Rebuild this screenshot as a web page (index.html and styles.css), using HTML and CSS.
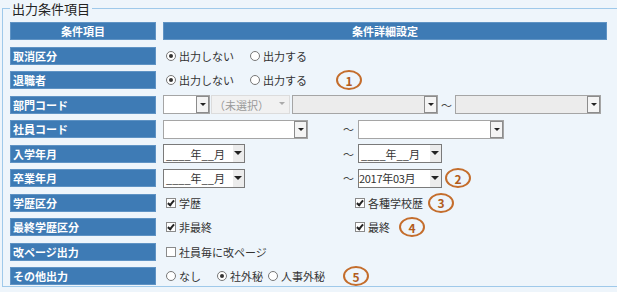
FILE: index.html
```html
<!DOCTYPE html>
<html lang="ja">

<head>
  <meta charset="UTF-8" />
  <title>出力条件項目</title>
  <link rel="stylesheet" href="styles.css">
</head>

<body>
  <fieldset class="conditions">
    <legend>出力条件項目</legend>
    <section class="grid">
      <div class="head">条件項目</div>
      <div class="head">条件詳細設定</div>

      <div class="label">取消区分</div>
      <div class="value opts">
        <span class="opt"><i class="radio on"></i>出力しない</span>
        <span class="opt"><i class="radio"></i>出力する</span>
      </div>

      <div class="label">退職者</div>
      <div class="value opts">
        <span class="opt"><i class="radio on"></i>出力しない</span>
        <span class="opt"><i class="radio"></i>出力する</span>
        <span class="mark">1</span>
      </div>

      <div class="label">部門コード</div>
      <div class="value dept">
        <div class="combo small"><span></span><b class="btn"></b></div>
        <div class="combo off"><span>（未選択）</span><b class="tri"></b></div>
        <div class="combo grey mid"><span></span><b class="btn"></b></div>
        <span class="tilde">～</span>
        <div class="combo grey mid"><span></span><b class="btn"></b></div>
      </div>

      <div class="label">社員コード</div>
      <div class="value pair">
        <div class="combo code"><span></span><b class="btn"></b></div>
        <span class="tilde">～</span>
        <div class="combo code"><span></span><b class="btn"></b></div>
      </div>

      <div class="label">入学年月</div>
      <div class="value pair">
        <div class="combo date"><span>____年__月</span><b class="drop"></b></div>
        <span class="tilde">～</span>
        <div class="combo date"><span>____年__月</span><b class="drop"></b></div>
      </div>

      <div class="label">卒業年月</div>
      <div class="value pair">
        <div class="combo date"><span>____年__月</span><b class="drop"></b></div>
        <span class="tilde">～</span>
        <div class="combo date"><span class="filled">2017年03月</span><b class="drop"></b></div>
        <span class="mark near">2</span>
      </div>

      <div class="label">学歴区分</div>
      <div class="value pair">
        <span class="opt"><i class="check on"></i>学歴</span>
        <span class="opt"><i class="check on"></i>各種学校歴</span>
        <span class="mark">3</span>
      </div>

      <div class="label">最終学歴区分</div>
      <div class="value pair">
        <span class="opt"><i class="check on"></i>非最終</span>
        <span class="opt"><i class="check on"></i>最終</span>
        <span class="mark far">4</span>
      </div>

      <div class="label">改ページ出力</div>
      <div class="value">
        <span class="opt"><i class="check"></i>社員毎に改ページ</span>
      </div>

      <div class="label">その他出力</div>
      <div class="value opts short">
        <span class="opt"><i class="radio"></i>なし</span>
        <span class="opt"><i class="radio on"></i>社外秘</span>
        <span class="opt"><i class="radio"></i>人事外秘</span>
        <span class="mark farther">5</span>
      </div>
    </section>
  </fieldset>
</body>

</html>
```

FILE: styles.css
```css
body {
  margin: 0;
  padding: 0 0 0 2px;
  background-color: #eef5fb;
  font-family: "Noto Sans CJK JP", "Liberation Sans", sans-serif;
  font-size: 11px;
  color: #333;
}

.conditions {
  margin: 0;
  padding: 5px 0 1px 7px;
  width: 615px;
  box-sizing: border-box;
  border: 1px solid #9fc9ea;
  border-right: none;
}

.conditions legend {
  padding: 0 2px;
  margin-left: 0;
  font-size: 13px;
  line-height: 17px;
  color: #222;
}

.grid {
  display: grid;
  grid-template-columns: 146px 444px;
  grid-auto-rows: 18px;
  column-gap: 7px;
  row-gap: 6.5px;
}

.head,
.label {
  background-color: #3e7bb5;
  border: 1px solid #5f93c4;
  color: #fff;
  font-weight: bold;
  line-height: 16px;
}

.head {
  text-align: center;
}

.label {
  padding-left: 2px;
}

.value {
  display: flex;
  align-items: center;
  white-space: nowrap;
}

.opt {
  display: inline-flex;
  align-items: center;
  flex-shrink: 0;
}

.opts .opt {
  min-width: 84px;
}

.opts.short .opt {
  min-width: 51px;
}

.pair .opt:first-child {
  width: 189px;
}

.radio,
.check {
  display: inline-block;
  box-sizing: border-box;
  width: 10px;
  height: 10px;
  margin: 0 3px 0 3px;
  border: 1px solid #777;
  background-color: #fff;
  position: relative;
}

.radio {
  border-radius: 50%;
}

.radio.on::after {
  content: "";
  position: absolute;
  left: 2px;
  top: 2px;
  width: 4px;
  height: 4px;
  border-radius: 50%;
  background-color: #333;
}

.check {
  border-color: #8a8a8a;
}

.check.on::after {
  content: "";
  position: absolute;
  left: 2px;
  top: 0px;
  width: 2px;
  height: 5px;
  border: solid #222;
  border-width: 0 2px 2px 0;
  transform: rotate(40deg);
}

.tilde {
  width: 15px;
  flex-shrink: 0;
  color: #444;
}

.combo {
  display: flex;
  align-items: center;
  flex-shrink: 0;
  box-sizing: border-box;
  height: 19px;
  border: 1px solid #a5a5a5;
  background-color: #fff;
}

.combo span {
  flex: 1;
  padding-left: 2px;
  overflow: hidden;
}

.combo .btn {
  box-sizing: border-box;
  width: 13px;
  height: 17px;
  border: 1px solid #8c8c8c;
  background-color: #f4f4f4;
  position: relative;
}

.combo .btn::after,
.combo .tri::after,
.combo .drop::after {
  content: "";
  position: absolute;
  left: 3px;
  top: 6px;
  border: 3px solid transparent;
  border-top: 3px solid #222;
  border-bottom: none;
}

.combo .tri {
  width: 13px;
  height: 17px;
  position: relative;
}

.combo .tri::after {
  border-top-color: #aaa;
}

.combo .drop {
  width: 11px;
  height: 17px;
  background-color: #ececec;
  position: relative;
}

.combo .drop::after {
  left: 1px;
  top: 6px;
  border-width: 4px 4px 0 4px;
}

.combo.small {
  width: 47px;
  margin-right: 1px;
}

.combo.off {
  width: 79px;
  margin-right: 2px;
  border-color: #dcdcdc;
  background-color: #f1f1f1;
  color: #9a9a9a;
}

.combo.grey {
  background-color: #ececec;
}

.combo.mid {
  width: 146px;
}

.dept .tilde {
  width: 17px;
  text-align: center;
}

.combo.code {
  width: 146px;
}

.pair .combo.code:first-child {
  width: 145px;
  margin-right: 35px;
}

.pair .combo.date:first-child {
  width: 82px;
  margin-right: 98px;
}

.combo.date {
  width: 84px;
  border-color: #7a7a7a;
}

.combo .filled {
  padding-left: 0;
  letter-spacing: -0.3px;
}

.mark {
  display: inline-flex;
  align-items: center;
  justify-content: center;
  flex-shrink: 0;
  box-sizing: border-box;
  width: 26px;
  height: 20px;
  margin-left: 5px;
  border: 2px solid #c46d2c;
  border-radius: 50%;
  color: #b25c1c;
  font-weight: bold;
  font-size: 12px;
}

.mark.near {
  margin-left: 3px;
}

.mark.far {
  margin-left: 9px;
}

.mark.farther {
  margin-left: 18px;
}
```
